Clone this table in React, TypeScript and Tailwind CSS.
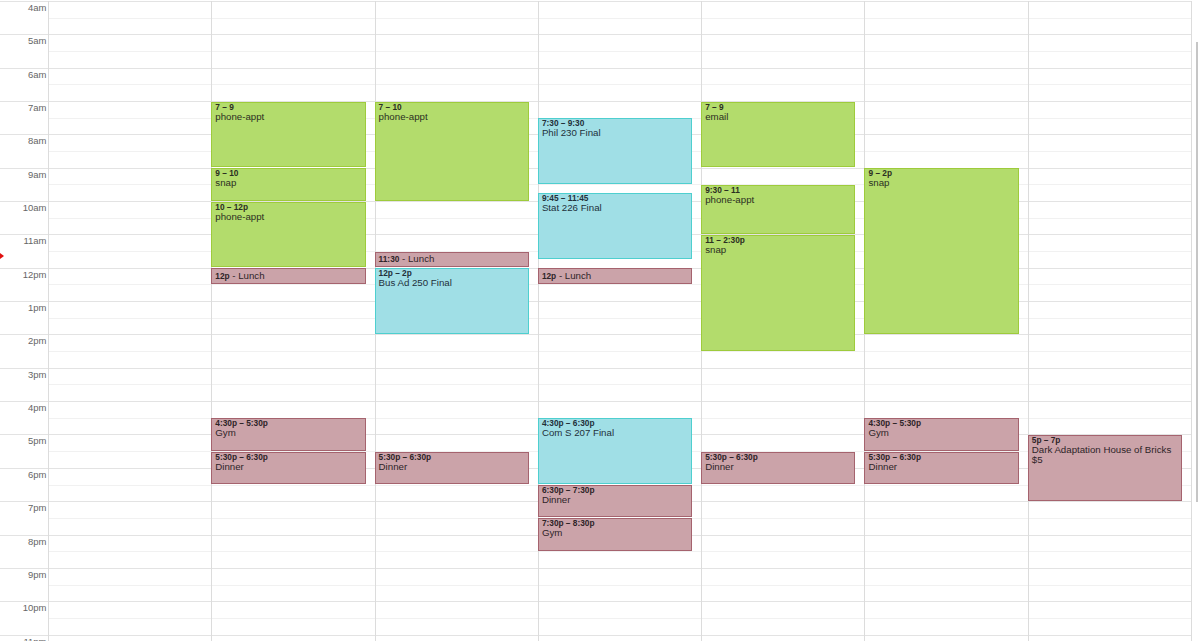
import React from "react";

const H = 33.35;
const hours = [
  "4am","5am","6am","7am","8am","9am","10am","11am","12pm","1pm","2pm","3pm",
  "4pm","5pm","6pm","7pm","8pm","9pm","10pm","11pm",
];

type Kind = "g" | "c" | "p";
type Ev = { col: number; s: number; e: number; time: string; title: string; kind: Kind; extra?: string; inline?: boolean };

const events: Ev[] = [
  { col: 1, s: 7, e: 9, time: "7 – 9", title: "phone-appt", kind: "g" },
  { col: 1, s: 9, e: 10, time: "9 – 10", title: "snap", kind: "g" },
  { col: 1, s: 10, e: 12, time: "10 – 12p", title: "phone-appt", kind: "g" },
  { col: 1, s: 12, e: 12.5, time: "12p", title: "Lunch", kind: "p", inline: true },
  { col: 1, s: 16.5, e: 17.5, time: "4:30p – 5:30p", title: "Gym", kind: "p" },
  { col: 1, s: 17.5, e: 18.5, time: "5:30p – 6:30p", title: "Dinner", kind: "p" },

  { col: 2, s: 7, e: 10, time: "7 – 10", title: "phone-appt", kind: "g" },
  { col: 2, s: 11.5, e: 12, time: "11:30", title: "Lunch", kind: "p", inline: true },
  { col: 2, s: 12, e: 14, time: "12p – 2p", title: "Bus Ad 250 Final", kind: "c" },
  { col: 2, s: 17.5, e: 18.5, time: "5:30p – 6:30p", title: "Dinner", kind: "p" },

  { col: 3, s: 7.5, e: 9.5, time: "7:30 – 9:30", title: "Phil 230 Final", kind: "c" },
  { col: 3, s: 9.75, e: 11.75, time: "9:45 – 11:45", title: "Stat 226 Final", kind: "c" },
  { col: 3, s: 12, e: 12.5, time: "12p", title: "Lunch", kind: "p", inline: true },
  { col: 3, s: 16.5, e: 18.5, time: "4:30p – 6:30p", title: "Com S 207 Final", kind: "c" },
  { col: 3, s: 18.5, e: 19.5, time: "6:30p – 7:30p", title: "Dinner", kind: "p" },
  { col: 3, s: 19.5, e: 20.5, time: "7:30p – 8:30p", title: "Gym", kind: "p" },

  { col: 4, s: 7, e: 9, time: "7 – 9", title: "email", kind: "g" },
  { col: 4, s: 9.5, e: 11, time: "9:30 – 11", title: "phone-appt", kind: "g" },
  { col: 4, s: 11, e: 14.5, time: "11 – 2:30p", title: "snap", kind: "g" },
  { col: 4, s: 17.5, e: 18.5, time: "5:30p – 6:30p", title: "Dinner", kind: "p" },

  { col: 5, s: 9, e: 14, time: "9 – 2p", title: "snap", kind: "g" },
  { col: 5, s: 16.5, e: 17.5, time: "4:30p – 5:30p", title: "Gym", kind: "p" },
  { col: 5, s: 17.5, e: 18.5, time: "5:30p – 6:30p", title: "Dinner", kind: "p" },

  { col: 6, s: 17, e: 19, time: "5p – 7p", title: "Dark Adaptation House of Bricks", extra: "$5", kind: "p" },
];

const kindClass: Record<Kind, string> = {
  g: "bg-[#b3dc6c] border-[#9ecb3c] text-[#2b2f22]",
  c: "bg-[#a0dfe6] border-[#4ecfcf] text-[#22303a]",
  p: "bg-[#cba3a9] border-[#a5636e] text-[#2e2428]",
};

function EventBox({ ev }: { ev: Ev }) {
  const top = Math.round(1.5 + (ev.s - 4) * H);
  const bottom = Math.round(1.5 + (ev.e - 4) * H);
  const style = { top: top - 1, height: bottom - 1 - top };
  return (
    <div
      className={`absolute -left-px right-[9px] border overflow-hidden ${kindClass[ev.kind]}`}
      style={style}
    >
      {ev.inline ? (
        <div className="flex items-center h-full pl-[3px] whitespace-nowrap">
          <span className="font-bold text-[8.3px]">{ev.time}</span>
          <span className="text-[9.7px]">&nbsp;- {ev.title}</span>
        </div>
      ) : (
        <div className="px-[3px]">
          <div className="font-bold text-[8.3px] leading-[9px] whitespace-nowrap">{ev.time}</div>
          <div className="text-[9.7px] leading-[10px]">{ev.title}</div>
          {ev.extra && <div className="text-[9.7px] leading-[10px]">{ev.extra}</div>}
        </div>
      )}
    </div>
  );
}

export default function App() {
  return (
    <div className="relative flex w-[1200px] h-[641px] overflow-hidden bg-white pt-[1px] font-['Liberation_Sans',Arial,sans-serif]">
      {/* gutter */}
      <div className="w-[48px] shrink-0 flex flex-col">
        {hours.map((h) => (
          <div key={h} className="h-[33.35px] shrink-0 border-t border-[#e3e3e3] text-right pr-[1.5px] text-[9.5px] leading-[11px] text-[#666]">
            {h}
          </div>
        ))}
      </div>
      {/* day columns */}
      <div className="flex shrink-0 border-r border-[#dcdcdc] h-[700px]">
        {[0, 1, 2, 3, 4, 5, 6].map((c) => (
          <div key={c} className="relative w-[163.3px] shrink-0 border-l border-[#dcdcdc] flex flex-col">
            {hours.map((h) => (
              <div key={h} className="h-[33.35px] shrink-0 border-t border-[#e3e3e3]">
                <div className="h-[16.7px] border-b border-[#f1f1f1]" />
              </div>
            ))}
            {events.filter((e) => e.col === c).map((e, i) => (
              <EventBox key={i} ev={e} />
            ))}
          </div>
        ))}
      </div>
      {/* scroll area */}
      <div className="relative flex-1">
        <div className="absolute top-[41px] left-[4px] w-[2px] h-[460px] bg-[#c6c6c6]" />
      </div>
      {/* current time marker */}
      <div className="absolute left-0 top-[253px] w-0 h-0 border-y-[3px] border-y-transparent border-l-[4px] border-l-[#e01010]" />
    </div>
  );
}
